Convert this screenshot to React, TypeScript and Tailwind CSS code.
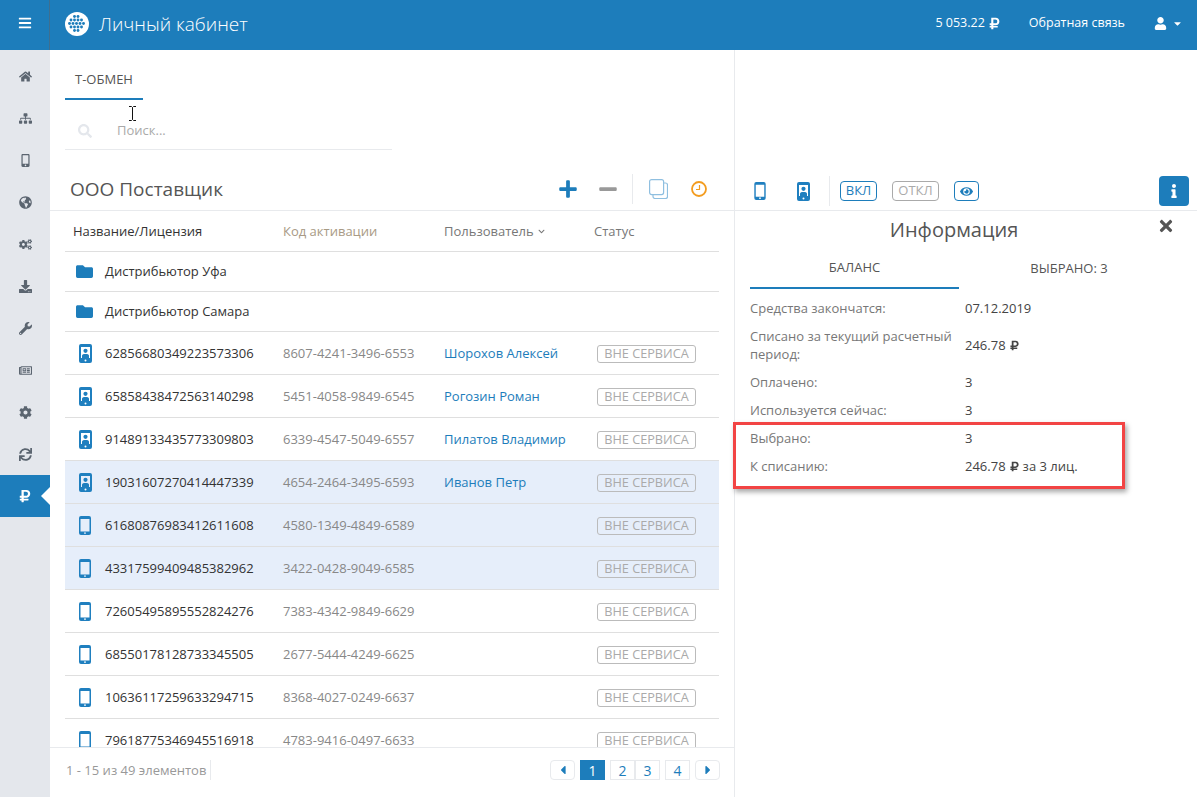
import React from "react";
import {
  FaBars, FaHome, FaSitemap, FaMobileAlt, FaGlobeAmericas, FaCogs, FaDownload, FaWrench, FaRegNewspaper,
  FaCog, FaSync, FaRubleSign, FaUser, FaCaretDown, FaSearch, FaPlus, FaMinus, FaFolder, FaEye, FaInfo, FaTimes,
  FaCaretLeft, FaCaretRight, FaChevronDown,
} from "react-icons/fa";

const Logo = () => (
  <svg viewBox="0 0 24 24" className="w-[24px] h-[24px]">
    <circle cx="12" cy="12" r="12" fill="#fff" />
    {[[9.5,4.5],[13,4.5],[6,8],[9.5,8],[13,8],[16.5,8],[4.5,11.5],[8,11.5],[11.5,11.5],[15,11.5],[18.5,11.5],[6,15],[9.5,15],[13,15],[16.5,15],[9.5,18.5],[13,18.5]].map(([x,y],i)=>(
      <circle key={i} cx={x} cy={y} r="1.45" fill="#1d7dbb" />
    ))}
  </svg>
);

const Phone = ({ w = 12, h = 19, color = "#1f7fbf" }: { w?: number; h?: number; color?: string }) => (
  <svg width={w} height={h} viewBox="0 0 12 19">
    <path fillRule="evenodd" fill={color} d="M2 0h8a2 2 0 0 1 2 2v15a2 2 0 0 1-2 2H2a2 2 0 0 1-2-2V2a2 2 0 0 1 2-2zM1.5 3v12.5h9V3zM6 16.2a.9.9 0 1 0 0 1.8.9.9 0 0 0 0-1.8z" />
  </svg>
);

const PersonPhone = ({ color = "#1f7fbf" }: { color?: string }) => (
  <svg width={13} height={19} viewBox="0 0 13 19">
    <path fillRule="evenodd" fill={color} d="M2 0h9a2 2 0 0 1 2 2v15a2 2 0 0 1-2 2H2a2 2 0 0 1-2-2V2a2 2 0 0 1 2-2zM2 3v11h9V3z" />
    <circle cx="6.5" cy="6.8" r="2.1" fill={color} />
    <path fill={color} d="M3 14v-2.4c0-.9 1-1.5 3.5-1.5s3.5.6 3.5 1.5V14z" />
    <circle cx="6.5" cy="16.5" r="1" fill="#fff" />
  </svg>
);

const rows = [
  ["62856680349223573306", "8607-4241-3496-6553", "Шорохов Алексей", "p", false],
  ["65858438472563140298", "5451-4058-9849-6545", "Рогозин Роман", "p", false],
  ["91489133435773309803", "6339-4547-5049-6557", "Пилатов Владимир", "p", false],
  ["19031607270414447339", "4654-2464-3495-6593", "Иванов Петр", "p", true],
  ["61680876983412611608", "4580-1349-4849-6589", "", "m", true],
  ["43317599409485382962", "3422-0428-9049-6585", "", "m", true],
  ["72605495895552824276", "7383-4342-9849-6629", "", "m", false],
  ["68550178128733345505", "2677-5444-4249-6625", "", "m", false],
  ["10636117259633294715", "8368-4027-0249-6637", "", "m", false],
  ["79618775346945516918", "4783-9416-0497-6633", "", "m", false],
] as const;

const navIcons = [
  <FaHome />, <FaSitemap />, <FaMobileAlt />, <FaGlobeAmericas />, <FaCogs />, <FaDownload />, <FaWrench />, <FaRegNewspaper />, <FaCog />, <FaSync />,
];

const info: [string, React.ReactNode][] = [
  ["Средства закончатся:", "07.12.2019"],
  ["Списано за текущий расчетный период:", <span className="inline-flex items-center gap-[3px]">246.78 <FaRubleSign className="text-[11px]" /></span>],
  ["Оплачено:", "3"],
  ["Используется сейчас:", "3"],
  ["Выбрано:", "3"],
  ["К списанию:", <span className="inline-flex items-center gap-[3px]">246.78 <FaRubleSign className="text-[11px]" /> за 3 лиц.</span>],
];

export default function App() {
  return (
    <div className="relative w-[1197px] h-[797px] overflow-hidden bg-white text-[13px] text-[#555]" style={{ fontFamily: '"Open Sans", sans-serif' }}>
      <header className="h-[50px] bg-[#1d7dbb] text-white flex items-center">
        <div className="w-[50px] h-full border-r border-[#3f6f90] flex items-center justify-center text-[14px] pb-[4px]"><FaBars /></div>
        <div className="ml-[15px] pb-[2px]"><Logo /></div>
        <div className="ml-[10px] text-[19px] font-light pb-[2px]">Личный кабинет</div>
        <div className="ml-auto flex items-center text-[12.5px] pb-[4px]">
          <span className="flex items-center gap-[3px]">5 053.22 <FaRubleSign className="text-[13px]" /></span>
          <span className="ml-[28px]">Обратная связь</span>
          <span className="ml-[29px] mr-[14px] flex items-center gap-[5px] text-[13px]"><FaUser /><FaCaretDown className="text-[11px]" /></span>
        </div>
      </header>

      <div className="flex h-[747px]">
        <nav className="w-[50px] bg-[#e4e7ec] flex flex-col items-center shrink-0">
          <div className="w-full flex flex-col items-center pt-[5px] text-[13px] text-[#5b6570]">
            {navIcons.map((ic, i) => (
              <div key={i} className="h-[42px] w-full flex items-center justify-center">{ic}</div>
            ))}
          </div>
          <div className="relative w-full h-[42px] bg-[#1d7dbb] text-white flex items-center justify-center text-[14px]">
            <FaRubleSign />
            <div className="absolute right-0 top-[12px] w-0 h-0 border-y-[9px] border-y-transparent border-r-[9px] border-r-white" />
          </div>
        </nav>

        <main className="w-[685px] border-r border-[#e8eaed] flex flex-col shrink-0">
          <div className="px-[15px]">
            <div className="h-[50px] w-[78px] flex items-center justify-center pt-[12px] text-[13px] text-[#555] border-b-2 border-[#1d7dbb]">Т-ОБМЕН</div>
            <div className="w-[327px] h-[50px] pt-[13px] border-b border-[#e8eaed] flex items-center text-[13px] text-[#aaa]">
              <FaSearch className="ml-[13px] text-[14px] text-[#e4e7ec]" />
              <span className="ml-[25px]">Поиск...</span>
            </div>
          </div>
          <div className="h-[61px] border-b border-[#e8eaed] flex items-end pb-[6px] pl-[20px] pr-[27px]">
            <div className="text-[19px] text-[#555] leading-[29px]">ООО Поставщик</div>
            <div className="ml-auto flex items-center h-[30px]">
              <FaPlus className="text-[#1d7dbb] text-[20px] -ml-[1px]" />
              <FaMinus className="ml-[20px] text-[#999] text-[20px]" />
              <div className="ml-[14px] w-px h-[30px] bg-[#e8eaed]" />
              <svg width="19" height="20" viewBox="0 0 19 20" className="ml-[16px]" fill="none" stroke="#8fbfe0" strokeWidth="1.2">
                <rect x="0.6" y="0.6" width="14" height="15" rx="2" />
                <path d="M15 4h1.5a2 2 0 0 1 2 2v11.5a2 2 0 0 1-2 2H6a2 2 0 0 1-2-2V16" />
              </svg>
              <svg width="16" height="16" viewBox="0 0 16 16" className="ml-[23px]" fill="none" stroke="#f39c1f">
                <circle cx="8" cy="8" r="7" strokeWidth="1.8" />
                <path d="M8.5 4v4.5H5" strokeWidth="1.2" />
              </svg>
            </div>
          </div>

          <div className="ml-[15px] w-[654px] flex-1 min-h-0 overflow-hidden">
            <div className="h-[41px] pt-[1px] border-b border-[#dfdfdf] flex items-center text-[13px]">
              <div className="w-[218px] pl-[8px] text-[#333]">Название/Лицензия</div>
              <div className="w-[161px] text-[#a89a85]">Код активации</div>
              <div className="w-[150px] flex items-center gap-[4px] text-[#777]">Пользователь <FaChevronDown className="text-[7px]" /></div>
              <div className="text-[#777]">Статус</div>
            </div>
            {["Дистрибьютор Уфа", "Дистрибьютор Самара"].map((n) => (
              <div key={n} className="h-[40px] border-b border-[#dfdfdf] flex items-center text-[13px] text-[#333]">
                <div className="w-[40px] pl-[11px]"><FaFolder className="text-[#1d7dbb] text-[17px]" /></div>
                {n}
              </div>
            ))}
            {rows.map((r) => (
              <div key={r[0]} className={`h-[43px] border-b border-[#dfdfdf] flex items-center text-[13px] ${r[4] ? "bg-[#e6eefa]" : ""}`}>
                <div className="w-[40px] pl-[14px] flex items-center">{r[3] === "p" ? <PersonPhone /> : <Phone />}</div>
                <div className="w-[178px] pt-[2px] text-[#333]">{r[0]}</div>
                <div className="w-[161px] pt-[2px] text-[#888]">{r[1]}</div>
                <div className="w-[153px] pt-[2px] text-[#1d7dbb]">{r[2]}</div>
                <div className="h-[18px] w-[99px] mt-[1px] border border-[#bbb] rounded-[3px] flex items-center justify-center text-[12.7px] text-[#aaa]">ВНЕ СЕРВИСА</div>
              </div>
            ))}
          </div>

          <footer className="h-[50px] shrink-0 border-t border-[#e8eaed] flex items-start pt-[12px] pl-[16px] pr-[14px]">
            <div className="h-[20px] pr-[4px] border-r border-[#e8eaed] text-[13px] text-[#999] leading-[20px]">1 - 15 из 49 элементов</div>
            <div className="ml-auto flex items-center">
              <div className="w-[25px] h-[20px] border border-[#e8eaed] rounded-[4px] flex items-center justify-center text-[#1d7dbb] text-[14px]"><FaCaretLeft /></div>
              <div className="w-[25px] h-[20px] ml-[5px] bg-[#1d7dbb] text-white flex items-center justify-center text-[14px]">1</div>
              <div className="w-[25px] h-[20px] ml-[5px] border border-[#e8eaed] text-[#1d7dbb] flex items-center justify-center text-[14px]">2</div>
              <div className="w-[25px] h-[20px] border border-[#e8eaed] text-[#1d7dbb] flex items-center justify-center text-[14px]">3</div>
              <div className="w-[25px] h-[20px] ml-[5px] border border-[#e8eaed] text-[#1d7dbb] flex items-center justify-center text-[14px]">4</div>
              <div className="w-[25px] h-[20px] ml-[5px] border border-[#e8eaed] rounded-[4px] flex items-center justify-center text-[#1d7dbb] text-[14px]"><FaCaretRight /></div>
            </div>
          </footer>
        </main>

        <aside className="flex-1 min-w-0 flex flex-col">
          <div className="h-[161px] border-b border-[#e8eaed] flex items-end pb-[4px] pl-[19px] pr-[8px] shrink-0">
            <div className="flex items-center h-[30px] w-full">
              <Phone w={12} h={18} />
              <div className="ml-[31px]"><PersonPhone /></div>
              <div className="ml-[19px] w-px h-[30px] bg-[#e8eaed]" />
              <div className="ml-[10px] w-[37px] h-[20px] border border-[#1d7dbb] rounded-[4px] text-[#1d7dbb] flex items-center justify-center text-[13px]">ВКЛ</div>
              <div className="ml-[15px] w-[47px] h-[20px] border border-[#aaa] rounded-[4px] text-[#aaa] flex items-center justify-center text-[13px]">ОТКЛ</div>
              <div className="ml-[15px] w-[25px] h-[20px] border border-[#1d7dbb] rounded-[4px] text-[#1d7dbb] flex items-center justify-center text-[13px]"><FaEye /></div>
              <div className="ml-auto w-[30px] h-[30px] bg-[#1d7dbb] rounded-[4px] text-white flex items-center justify-center text-[14px]"><FaInfo /></div>
            </div>
          </div>
          <div className="relative flex-1 min-h-0">
            <FaTimes className="absolute right-[22px] top-[6px] text-[#555] text-[18px]" />
            <div className="text-center text-[20px] text-[#555] h-[36px] leading-[36px] pr-[24px] pt-[1px]">Информация</div>
            <div className="ml-[15px] mr-[14px] flex text-[13px] h-[41px] mt-[1px]">
              <div className="w-[209px] border-b-2 border-[#1d7dbb] flex items-center justify-center text-[#555]">БАЛАНС</div>
              <div className="flex-1 flex items-center justify-center text-[#555] pr-[4px]">ВЫБРАНО: 3</div>
            </div>
            <div className="ml-[15px] mt-[5px] text-[13px]">
              {info.map(([k, v]) => (
                <div key={k} className="flex items-center py-[5px]">
                  <div className="w-[215px] pr-[10px] text-[#777] leading-[18px]">{k}</div>
                  <div className="text-[#444] leading-[18px]">{v}</div>
                </div>
              ))}
            </div>
          </div>
        </aside>
      </div>

      <div className="absolute left-[733px] top-[422px] w-[392px] h-[67px] border-[3px] border-[#f24444] shadow-[2px_3px_5px_rgba(0,0,0,0.35)]" />
      <div className="absolute left-[129px] top-[106px] w-[7px] h-[15px]">
        <svg width="7" height="15" viewBox="0 0 7 15" fill="none" stroke="#111" strokeWidth="1"><path d="M0 .5h2.5L3.5 1.5 4.5.5H7M3.5 1.5v12M0 14.5h2.5l1-1 1 1H7" /></svg>
      </div>
    </div>
  );
}
